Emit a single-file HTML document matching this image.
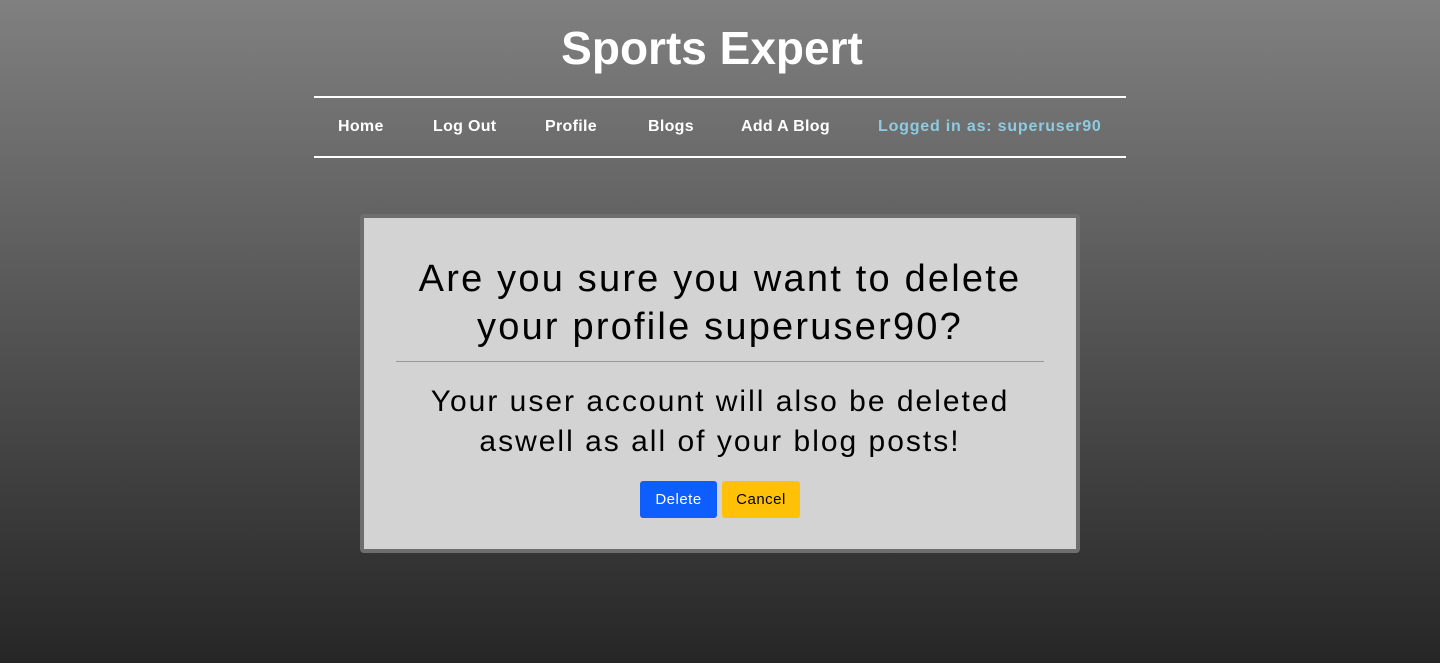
<!DOCTYPE html>
<html><head><style>
html,body{margin:0;padding:0}
body{width:1440px;height:663px;background:linear-gradient(#808080,#262626);font-family:"Liberation Sans",sans-serif;overflow:hidden;position:relative}
h1{position:absolute;top:22px;left:-8px;width:1440px;text-align:center;margin:0;color:#fff;font-size:46px;font-weight:bold;letter-spacing:0px;line-height:52px}
.nav{position:absolute;left:314px;top:96px;width:812px;height:58px;border-top:2px solid #fff;border-bottom:2px solid #fff}
.nav span{position:absolute;top:20px;color:#fff;font-weight:bold;font-size:16px;letter-spacing:0.3px}
.box{position:absolute;left:360px;top:214px;width:712px;height:331px;background:#d3d3d3;border:4px solid #6e6e6e;border-radius:4px;text-align:center}
.h{position:absolute;top:37px;left:0;width:712px;font-size:38px;letter-spacing:2.2px;line-height:48px;color:#000}
.hr{position:absolute;left:32px;top:143px;width:648px;height:1px;background:#999}
.p{position:absolute;top:164px;left:0;width:712px;font-size:30px;letter-spacing:2px;line-height:40px;color:#000}
.b{position:absolute;top:263px;height:37px;line-height:37px;border-radius:3px;font-size:15px;letter-spacing:0.5px}
</style></head><body>
<h1>Sports Expert</h1>
<div class="nav">
<span style="left:24px">Home</span>
<span style="left:119px">Log Out</span>
<span style="left:231px">Profile</span>
<span style="left:334px">Blogs</span>
<span style="left:427px">Add A Blog</span>
<span style="left:564px;color:#8fcbe0;letter-spacing:0.8px">Logged in as: superuser90</span>
</div>
<div class="box">
<div class="h">Are you sure you want to delete<br>your profile superuser90?</div>
<div class="hr"></div>
<div class="p">Your user account will also be deleted<br>aswell as all of your blog posts!</div>
<div class="b" style="left:276px;width:77px;background:#0d5efd;color:#fff">Delete</div>
<div class="b" style="left:358px;width:78px;background:#ffc107;color:#000">Cancel</div>
</div>
</body></html>
